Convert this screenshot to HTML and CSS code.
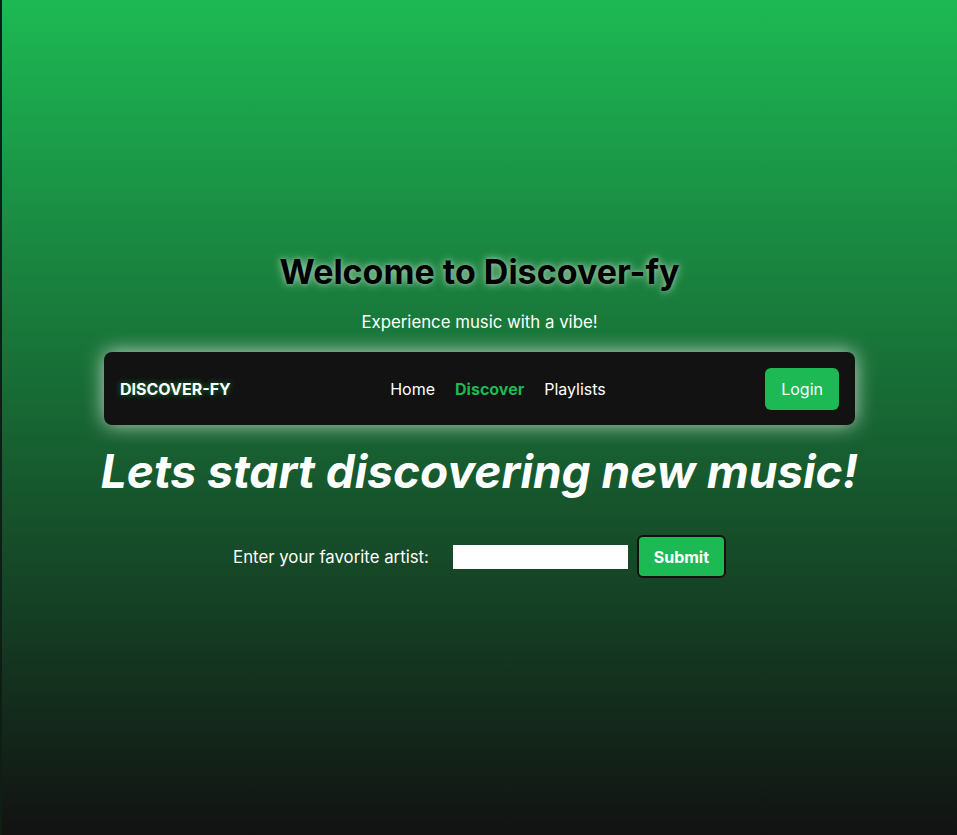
FILE: index.html
```html
<!DOCTYPE html>
<html lang="en">
<head>
<meta charset="utf-8">
<title>Discover-fy</title>
<link rel="stylesheet" href="styles.css">
</head>
<body>
  <main class="page">
    <h1 class="title">Welcome to Discover-fy</h1>
    <p class="subtitle">Experience music with a vibe!</p>
    <nav class="navbar">
      <div class="brand">DISCOVER-FY</div>
      <ul class="links">
        <li><a class="link" href="#">Home</a></li>
        <li><a class="link active" href="#">Discover</a></li>
        <li><a class="link" href="#">Playlists</a></li>
      </ul>
      <button class="login">Login</button>
    </nav>
    <h2 class="headline">Lets start discovering new music!</h2>
    <form class="artist-form">
      <label class="label" for="artist">Enter your favorite artist:</label>
      <input class="input" id="artist" type="text">
      <button class="submit" type="button">Submit</button>
    </form>
  </main>
</body>
</html>
```

FILE: styles.css
```css
* { box-sizing: border-box; }
html, body { margin: 0; height: 100%; }
body {
  font-family: Inter, "Noto Sans", sans-serif;
  background: linear-gradient(#1db954, #121212);
  color: #fff;
  border-left: 2px solid #0d1f14;
}
.page {
  min-height: 100%;
  display: flex;
  flex-direction: column;
  align-items: center;
  justify-content: center;
  padding-bottom: 6px;
}
.title {
  margin: 0;
  font-size: 34px;
  font-weight: 700;
  color: #000;
  text-shadow: 0 0 10px rgba(255,255,255,0.6), 0 0 4px rgba(255,255,255,0.3);
}
.subtitle {
  margin: 20px 0 20px;
  font-size: 16.8px;
}
.navbar {
  width: 751px;
  height: 73px;
  background: #121212;
  border-radius: 8px;
  box-shadow: 0 0 20px rgba(255,255,255,0.72);
  display: flex;
  align-items: center;
  justify-content: space-between;
  padding: 0 16px;
}
.brand {
  font-weight: 700;
  font-size: 16px;
  text-shadow: 0 0 6px rgba(29,185,84,0.7);
}
.links {
  list-style: none;
  display: flex;
  gap: 20px;
  margin: 0;
  padding: 0;
}
.link {
  color: #fff;
  text-decoration: none;
  font-size: 16px;
}
.link.active {
  color: #1db954;
  font-weight: 700;
}
.login {
  background: #1db954;
  color: #fff;
  border: none;
  border-radius: 6px;
  font: inherit;
  font-size: 16px;
  padding: 0 16px;
  height: 42px;
}
.headline {
  margin: 18px 0 36px;
  font-size: 46px;
  font-style: italic;
  font-weight: 700;
}
.artist-form {
  display: flex;
  align-items: center;
}
.label { font-size: 16.8px; margin-right: 24px; }
.input {
  width: 175px;
  height: 24px;
  border: none;
  margin-right: 9px;
}
.submit {
  background: #1db954;
  color: #fff;
  border: 2px solid #111;
  border-radius: 6px;
  font: inherit;
  font-weight: 700;
  font-size: 16px;
  height: 43px;
  width: 89px;
  padding: 0;
}
```
